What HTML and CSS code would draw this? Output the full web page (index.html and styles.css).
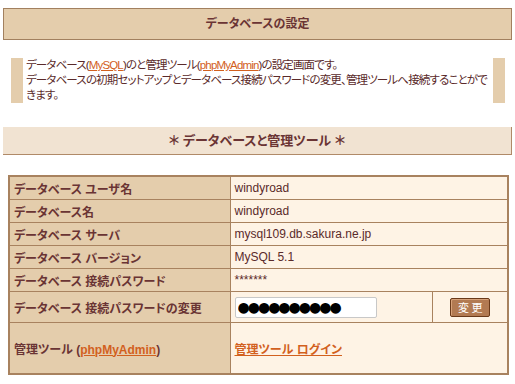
FILE: index.html
```html
<!DOCTYPE html>
<html lang="ja">
<head>
    <meta charset="UTF-8">
    <title>データベースの設定</title>
    <link rel="stylesheet" href="styles.css">
</head>
<body>
    <h1 class="page-title">データベースの設定</h1>

    <div class="intro">
        データベース(<a href="#">MySQL</a>)のと管理ツール(<a href="#">phpMyAdmin</a>)の設定画面です。<br>
        データベースの初期セットアップとデータベース接続パスワードの変更、管理ツールへ接続することができます。
    </div>

    <h2 class="section-title">＊ データベースと管理ツール ＊</h2>

    <table class="db-table">
        <colgroup>
            <col class="col-label">
            <col class="col-value">
            <col class="col-action">
        </colgroup>
        <tr>
            <th>データベース ユーザ名</th>
            <td colspan="2">windyroad</td>
        </tr>
        <tr>
            <th>データベース名</th>
            <td colspan="2">windyroad</td>
        </tr>
        <tr>
            <th>データベース サーバ</th>
            <td colspan="2">mysql109.db.sakura.ne.jp</td>
        </tr>
        <tr>
            <th>データベース バージョン</th>
            <td colspan="2">MySQL 5.1</td>
        </tr>
        <tr>
            <th>データベース 接続パスワード</th>
            <td colspan="2">*******</td>
        </tr>
        <tr class="row-change">
            <th>データベース 接続パスワードの変更</th>
            <td><input type="text" class="pw-input" value="●●●●●●●●●●" readonly></td>
            <td class="action"><button class="btn">変 更</button></td>
        </tr>
        <tr class="row-tool">
            <th>管理ツール (<a href="#">phpMyAdmin</a>)</th>
            <td colspan="2"><a href="#" class="tool-link">管理ツール ログイン</a></td>
        </tr>
    </table>
</body>
</html>
```

FILE: styles.css
```css
body {
    margin: 0;
    padding: 8px 3px;
    font-family: "Liberation Sans", "Noto Sans CJK JP", sans-serif;
    font-size: 12px;
    font-feature-settings: "palt";
    color: #5a2a2a;
    background: #fff;
}
a {
    color: #d2601e;
}
.page-title {
    margin: 0;
    height: 30px;
    line-height: 30px;
    text-align: center;
    font-size: 12px;
    color: #6a3434;
    background: #e4cdac;
    border: 1px solid #a2805f;
}
.intro {
    margin: 18px 7px 0 8px;
    padding: 0 1px 0 3px;
    line-height: 15px;
    font-size: 11.5px;
    letter-spacing: -0.85px;
    border-left: 12px solid #e4cdac;
    border-right: 12px solid #e4cdac;
}
.section-title {
    margin: 24px 0 0;
    height: 27px;
    line-height: 27px;
    text-align: center;
    font-size: 13px;
    color: #6a3434;
    background: #f1e3d2;
    border-right: 1px solid #b08a68;
    border-bottom: 1px solid #b08a68;
}
.db-table {
    margin: 20px 0 0 5px;
    width: 501px;
    table-layout: fixed;
    border-collapse: collapse;
    border: 2px solid #a8825f;
}
.col-label {
    width: 221px;
}
.col-action {
    width: 75px;
}
.db-table th,
.db-table td {
    border: 1px solid #a8825f;
    padding: 0 4px;
    height: 22px;
    text-align: left;
}
.db-table th {
    background: #e4cdac;
    color: #6a3434;
}
.db-table td {
    background: #fef3e5;
}
.row-change th,
.row-change td {
    height: 30px;
}
.row-tool th,
.row-tool td {
    height: 50px;
}
.pw-input {
    width: 142px;
    height: 21px;
    box-sizing: border-box;
    padding: 0 2px;
    border: 1px solid #c8c8c8;
    border-radius: 2px;
    background: #fff;
    font-family: "DejaVu Sans", sans-serif;
    font-size: 14px;
    letter-spacing: -2px;
    color: #000;
}
.db-table td.action {
    text-align: center;
}
.btn {
    width: 40px;
    height: 19px;
    padding: 0;
    background: #b27a52;
    color: #fff;
    border: 1px solid #6a3a1a;
    border-radius: 2px;
    box-shadow: inset 1px 1px 0 #d7a27a;
    font-family: "Noto Sans CJK JP", sans-serif;
    font-size: 11px;
    cursor: pointer;
}
.tool-link {
    font-weight: bold;
}
```
